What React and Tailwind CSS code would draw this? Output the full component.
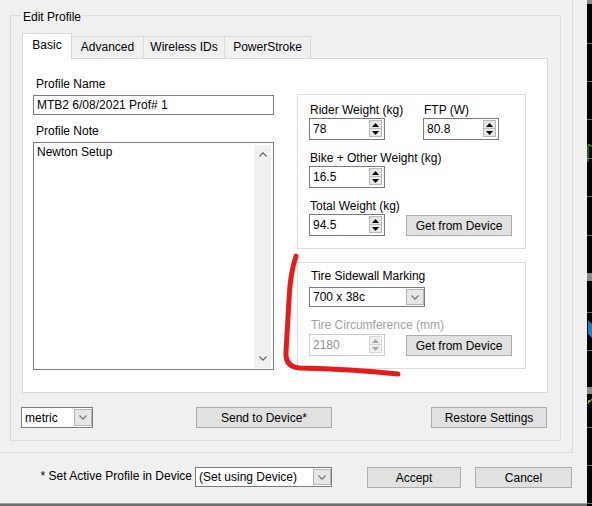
import React from "react";

function Chevron({ up = false, color = "#606060", w = 9, h = 5 }) {
  const d = up ? `M0.5 ${h - 0.5} L${w / 2} 0.8 L${w - 0.5} ${h - 0.5}` : `M0.5 0.5 L${w / 2} ${h - 0.8} L${w - 0.5} 0.5`;
  return (
    <svg width={w} height={h} viewBox={`0 0 ${w} ${h}`} className="block">
      <path d={d} fill="none" stroke={color} strokeWidth="1.1" />
    </svg>
  );
}

function Btn({ className = "", children }) {
  return (
    <div className={"flex shrink-0 items-center justify-center border border-[#adadad] bg-[#e1e1e1] " + className}>
      {children}
    </div>
  );
}

function Combo({ className = "", value }) {
  return (
    <div className={"flex shrink-0 border border-[#7a7a7a] bg-white " + className}>
      <div className="flex flex-1 items-center pl-[3px] whitespace-nowrap">{value}</div>
      <div className="my-[1px] flex w-[18px] items-center justify-center border border-[#b5b5b5] bg-[#e6e6e6]">
        <Chevron color="#707070" w={8} h={5} />
      </div>
    </div>
  );
}

function Tri({ up, color }) {
  return (
    <svg width="7" height="4" viewBox="0 0 7 4" className="block">
      {up ? <path d="M0 4 L3.5 0 L7 4 Z" fill={color} /> : <path d="M0 0 L3.5 4 L7 0 Z" fill={color} />}
    </svg>
  );
}

function Spin({ value, disabled = false }) {
  const border = disabled ? "border-[#cccccc]" : "border-[#7a7a7a]";
  const text = disabled ? "text-[#8f8f8f]" : "text-black";
  const tri = disabled ? "#a8a8a8" : "#000000";
  const bb = disabled ? "border-[#d6d6d6] bg-[#f0f0f0]" : "border-[#b8b8b8] bg-[#e6e6e6]";
  return (
    <div className={"flex h-[22px] w-[76px] shrink-0 border bg-white " + border}>
      <div className={"flex flex-1 items-center pl-[3px] " + text}>{value}</div>
      <div className="mr-[2px] mt-[1px] flex w-[13px] flex-col">
        <div className={"flex h-[9px] items-center justify-center border " + bb}>
          <Tri up color={tri} />
        </div>
        <div className={"-mt-[1px] flex h-[9px] items-center justify-center border " + bb}>
          <Tri color={tri} />
        </div>
      </div>
    </div>
  );
}

export default function App() {
  const ticks = [43, 81, 119, 158, 196, 235, 312, 350, 427, 465, 503];
  return (
    <div className="relative flex h-[506px] w-[592px] overflow-hidden bg-[#f0f0f0] font-['Liberation_Sans',Arial,sans-serif] text-[12px] leading-[16px] text-black">
      <div className="flex h-[506px] w-[587px] shrink-0 flex-col">
        <div className="h-[453px] w-[573px] shrink-0 border-b border-r border-[#dadada] pl-[10px] pt-[15px]">
          <div className="relative h-[426px] w-[551px] border border-[#dcdcdc] pl-[11px] pt-[17px]">
            <div className="absolute -top-[7px] left-[10px] bg-[#f0f0f0] px-[2px]">Edit Profile</div>

            <div className="flex h-[25px] items-end">
              <div className="relative z-10 -mb-[1px] h-[26px] w-[50px] border border-b-0 border-[#d9d9d9] bg-white pt-[3px] text-center">
                Basic
              </div>
              <div className="h-[22px] w-[72px] border-r border-t border-[#d9d9d9] pt-[2px] text-center">Advanced</div>
              <div className="h-[22px] w-[81px] border-r border-t border-[#d9d9d9] pt-[2px] text-center">Wireless IDs</div>
              <div className="h-[22px] w-[86px] border-r border-t border-[#d9d9d9] pt-[2px] text-center">PowerStroke</div>
            </div>

            <div className="flex h-[335px] w-[526px] items-start border border-[#d9d9d9] bg-white pl-[10px]">
              <div className="flex w-[241px] flex-col pt-[17px]">
                <div className="pl-[3px]">Profile Name</div>
                <div className="mt-[3px] flex h-[20px] items-center border border-[#7a7a7a] pl-[3px]">MTB2 6/08/2021 Prof# 1</div>
                <div className="mt-[8px] pl-[3px]">Profile Note</div>
                <div className="mt-[3px] flex h-[228px] border border-[#7a7a7a]">
                  <div className="flex-1 pl-[3px] pt-[1px]">Newton Setup</div>
                  <div className="mb-[1px] mr-[2px] mt-[2px] flex w-[17px] flex-col items-center justify-between bg-[#f0f0f0] py-[7px]">
                    <Chevron up color="#606060" w={8} h={5} />
                    <Chevron color="#606060" w={8} h={5} />
                  </div>
                </div>
              </div>

              <div className="ml-[23px] mt-[35px] flex w-[229px] flex-col">
                <div className="h-[155px] border border-[#dcdcdc] pl-[11px] pt-[7px]">
                  <div className="flex">
                    <div className="w-[114px]">
                      <div className="pl-[1px]">Rider Weight (kg)</div>
                      <Spin value="78" />
                    </div>
                    <div>
                      <div className="pl-[1px]">FTP (W)</div>
                      <Spin value="80.8" />
                    </div>
                  </div>
                  <div className="mt-[10px]">
                    <div className="pl-[1px]">Bike + Other Weight (kg)</div>
                    <Spin value="16.5" />
                  </div>
                  <div className="mt-[10px]">
                    <div className="pl-[1px]">Total Weight (kg)</div>
                    <div className="flex items-end">
                      <Spin value="94.5" />
                      <Btn className="ml-[21px] h-[21px] w-[106px]">Get from Device</Btn>
                    </div>
                  </div>
                </div>

                <div className="mt-[13px] h-[107px] border border-[#dcdcdc] pl-[11px] pt-[5px]">
                  <div className="pl-[2px]">Tire Sidewall Marking</div>
                  <Combo className="mt-[3px] h-[20px] w-[116px]" value="700 x 38c" />
                  <div className="mt-[10px] pl-[2px] text-[#a0a0a0]">Tire Circumference (mm)</div>
                  <div className="mt-[1px] flex items-end">
                    <Spin value="2180" disabled />
                    <Btn className="ml-[21px] h-[21px] w-[106px]">Get from Device</Btn>
                  </div>
                </div>
              </div>
            </div>

            <div className="-ml-[1px] mt-[14px] flex">
              <Combo className="h-[21px] w-[72px]" value="metric" />
              <Btn className="ml-[103px] h-[21px] w-[136px]">Send to Device*</Btn>
              <Btn className="ml-[99px] h-[21px] w-[116px]">Restore Settings</Btn>
            </div>
          </div>
        </div>

        <div className="mt-[14px] flex items-start">
          <div className="w-[192px] whitespace-nowrap pt-[1px] text-right">* Set Active Profile in Device</div>
          <Combo className="ml-[3px] h-[20px] w-[137px]" value="(Set using Device)" />
          <Btn className="ml-[35px] h-[21px] w-[94px]">Accept</Btn>
          <Btn className="ml-[14px] h-[21px] w-[97px]">Cancel</Btn>
        </div>

        <div className="mt-auto h-[3px] border-t border-[#a0a0a0] bg-[#707070]" />
      </div>

      <svg width="5" height="506" viewBox="0 0 5 506" className="block shrink-0 bg-black">
        <rect x="0" y="0" width="5" height="4" fill="#8a8a8a" />
        {ticks.map((y) => (
          <rect key={y} x="0" y={y} width="5" height="1" fill="#6b6b6b" />
        ))}
        <rect x="0" y="273" width="5" height="8" fill="#8a8a8a" />
        <rect x="0" y="387" width="5" height="7" fill="#8a8a8a" />
        <path d="M1 162 L1 146 L2 144 L3 146 L5 146" fill="none" stroke="#22cc22" strokeWidth="1" />
        <polygon points="1,320 5,324 5,338 1,334" fill="#1e7fbf" />
        <path d="M1 404 L2 400 L3 402 L5 399" fill="none" stroke="#d8c81a" strokeWidth="1" />
      </svg>

      <svg width="592" height="506" viewBox="0 0 592 506" className="pointer-events-none absolute left-0 top-0">
        <path
          d="M296 256 Q290 274 289 300 L286 352 Q285 367 300 368 Q350 369 398 374"
          fill="none"
          stroke="#e41c1c"
          strokeWidth="5"
          strokeLinecap="round"
          strokeLinejoin="round"
        />
      </svg>
    </div>
  );
}
